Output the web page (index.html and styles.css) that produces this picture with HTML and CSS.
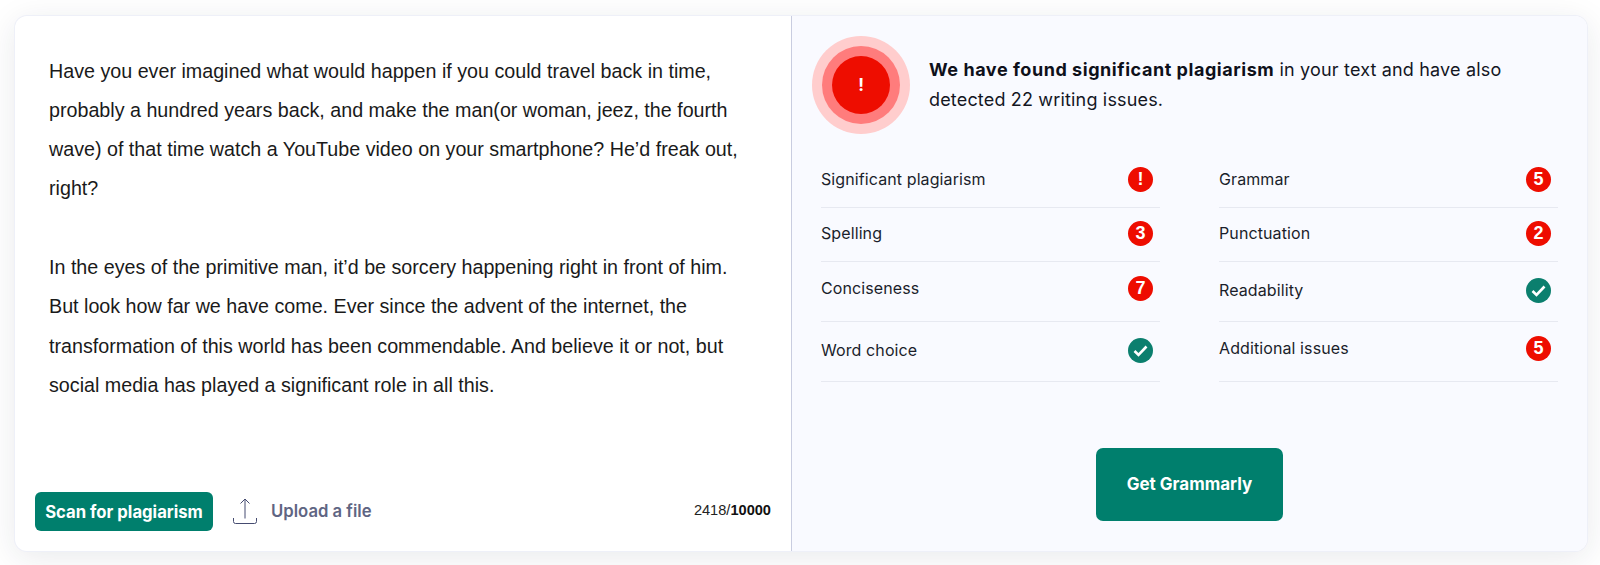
FILE: index.html
```html
<!DOCTYPE html>
<html lang="en">
<head>
<meta charset="utf-8">
<title>Plagiarism checker</title>
<link rel="stylesheet" href="styles.css">
</head>
<body>
<main class="card">
  <section class="editor">
    <div class="text">
      <p>Have you ever imagined what would happen if you could travel back in time, probably a hundred years back, and make the man(or woman, jeez, the fourth wave) of that time watch a YouTube video on your smartphone? He’d freak out, right?</p>
      <p>In the eyes of the primitive man, it’d be sorcery happening right in front of him. But look how far we have come. Ever since the advent of the internet, the transformation of this world has been commendable. And believe it or not, but social media has played a significant role in all this.</p>
    </div>
    <div class="toolbar">
      <button class="scan">Scan for plagiarism</button>
      <svg class="upload-icon" width="24" height="26" viewBox="0 0 24 26" fill="none">
        <path d="M12 20.500V1M7.500 5.500 12 1l4.500 4.500M.5 20v3.500a2 2 0 0 0 2 2h19a2 2 0 0 0 2-2V20" stroke="#454b70" stroke-width="1"/>
      </svg>
      <span class="upload">Upload a file</span>
      <span class="count">2418/<b>10000</b></span>
    </div>
  </section>
  <section class="results">
    <header class="summary">
      <div class="ring-outer"><div class="ring-mid"><div class="ring-core">!</div></div></div>
      <p class="headline"><b>We have found significant plagiarism</b> in your text and have also detected 22 writing issues.</p>
    </header>
    <div class="columns">
      <ul class="list">
        <li class="row"><span class="label">Significant plagiarism</span><span class="badge">!</span></li>
        <li class="row"><span class="label">Spelling</span><span class="badge">3</span></li>
        <li class="row tall high"><span class="label">Conciseness</span><span class="badge">7</span></li>
        <li class="row tall"><span class="label">Word choice</span><svg class="check" width="25" height="25" viewBox="0 0 25 25"><circle cx="12.500" cy="12.500" r="12.500" fill="#0b7f6e"/><path d="M6.500 13l4 4 8-8.500" fill="none" stroke="#fff" stroke-width="2.600"/></svg></li>
      </ul>
      <ul class="list">
        <li class="row"><span class="label">Grammar</span><span class="badge">5</span></li>
        <li class="row"><span class="label">Punctuation</span><span class="badge">2</span></li>
        <li class="row tall"><span class="label">Readability</span><svg class="check" width="25" height="25" viewBox="0 0 25 25"><circle cx="12.500" cy="12.500" r="12.500" fill="#0b7f6e"/><path d="M6.500 13l4 4 8-8.500" fill="none" stroke="#fff" stroke-width="2.600"/></svg></li>
        <li class="row tall high"><span class="label">Additional issues</span><span class="badge">5</span></li>
      </ul>
    </div>
    <div class="cta-wrap"><button class="cta">Get Grammarly</button></div>
  </section>
</main>
</body>
</html>
```
FILE: styles.css
```css
* { box-sizing: border-box; }
html, body { margin: 0; height: 100%; }
body {
  background: #fff;
  padding: 16px 13px 14px 15px;
  font-family: Inter, "Liberation Sans", sans-serif;
  color: #0e101a;
  overflow: hidden;
}
.card {
  display: flex;
  height: 535px;
  border-radius: 12px;
  background: #fff;
  box-shadow: 0 0 0 1px #eef0f8, 0 6px 32px rgba(30, 35, 60, .1);
  overflow: hidden;
}
.editor {
  width: 776px;
  padding: 35.500px 20px 20px 20px;
  display: flex;
  flex-direction: column;
  justify-content: space-between;
  flex: none;
}
.text {
  width: 700px;
  margin-left: 14px;
  font: 19.700px/39.300px "Liberation Sans", sans-serif;
  color: #1a1a1a;
}
.text p { margin: 0 0 39.300px; }
.toolbar {
  display: flex;
  align-items: center;
}
.scan, .cta {
  border: 0;
  color: #fff;
  background: #007f6d;
  font-family: Inter, sans-serif;
  font-weight: 700;
}
.scan {
  width: 178px;
  height: 39px;
  border-radius: 6px;
  font-size: 16.700px;
  padding: 0;
  white-space: nowrap;
}
.upload-icon { margin: -2px 14px 0 20px; }
.upload {
  font-size: 16.700px;
  font-weight: 600;
  color: #5f6583;
  margin-top: -1px;
}
.count {
  margin-left: auto;
  margin-top: -3px;
  font: 14.600px "Liberation Sans", sans-serif;
  color: #222;
}
.count b { color: #111; }
.results {
  flex: 1;
  background: #f9faff;
  border-left: 1px solid #c9cde0;
  display: flex;
  flex-direction: column;
  padding: 20px 29px 30px 20px;
}
.summary {
  display: flex;
  align-items: center;
  gap: 19px;
}
.ring-outer, .ring-mid {
  padding: 10px;
  border-radius: 50%;
}
.ring-outer { background: #ffcdcd; }
.ring-mid { background: #ff7c7c; }
.ring-core {
  width: 58px;
  height: 58px;
  border-radius: 50%;
  background: #ee0d00;
  color: #fff;
  font-size: 17px;
  font-weight: 700;
  display: flex;
  align-items: center;
  justify-content: center;
}
.headline {
  margin: 0 0 1px;
  font-size: 18px;
  line-height: 29.500px;
  letter-spacing: .17px;
  width: 620px;
  color: #14161f;
}
.headline b { font-weight: 700; color: #0e101a; letter-spacing: .55px; }
.columns {
  display: grid;
  grid-template-columns: 339px 339px;
  gap: 59px;
  margin: 20px 0 0 9px;
}
.list { list-style: none; margin: 0; padding: 0; }
.row {
  height: 54px;
  display: flex;
  align-items: center;
  justify-content: space-between;
  border-bottom: 1px solid #e7e9f1;
  padding: 0 7px 2px 0;
  font-size: 16px;
  letter-spacing: .1px;
  color: #1b1e2b;
}
.label { margin-top: -1px; }
.tall { height: 60px; }
.high { padding-bottom: 7px; }
.badge {
  width: 25px;
  height: 25px;
  border-radius: 50%;
  background: #ee0d00;
  color: #fff;
  font: 700 18px/25px "Liberation Sans", sans-serif;
  text-align: center;
}
.cta-wrap {
  margin-top: auto;
  padding-left: 284px;
}
.cta {
  width: 187px;
  height: 73px;
  padding: 0 0 2px;
  border-radius: 7px;
  font-size: 17px;
}
```
